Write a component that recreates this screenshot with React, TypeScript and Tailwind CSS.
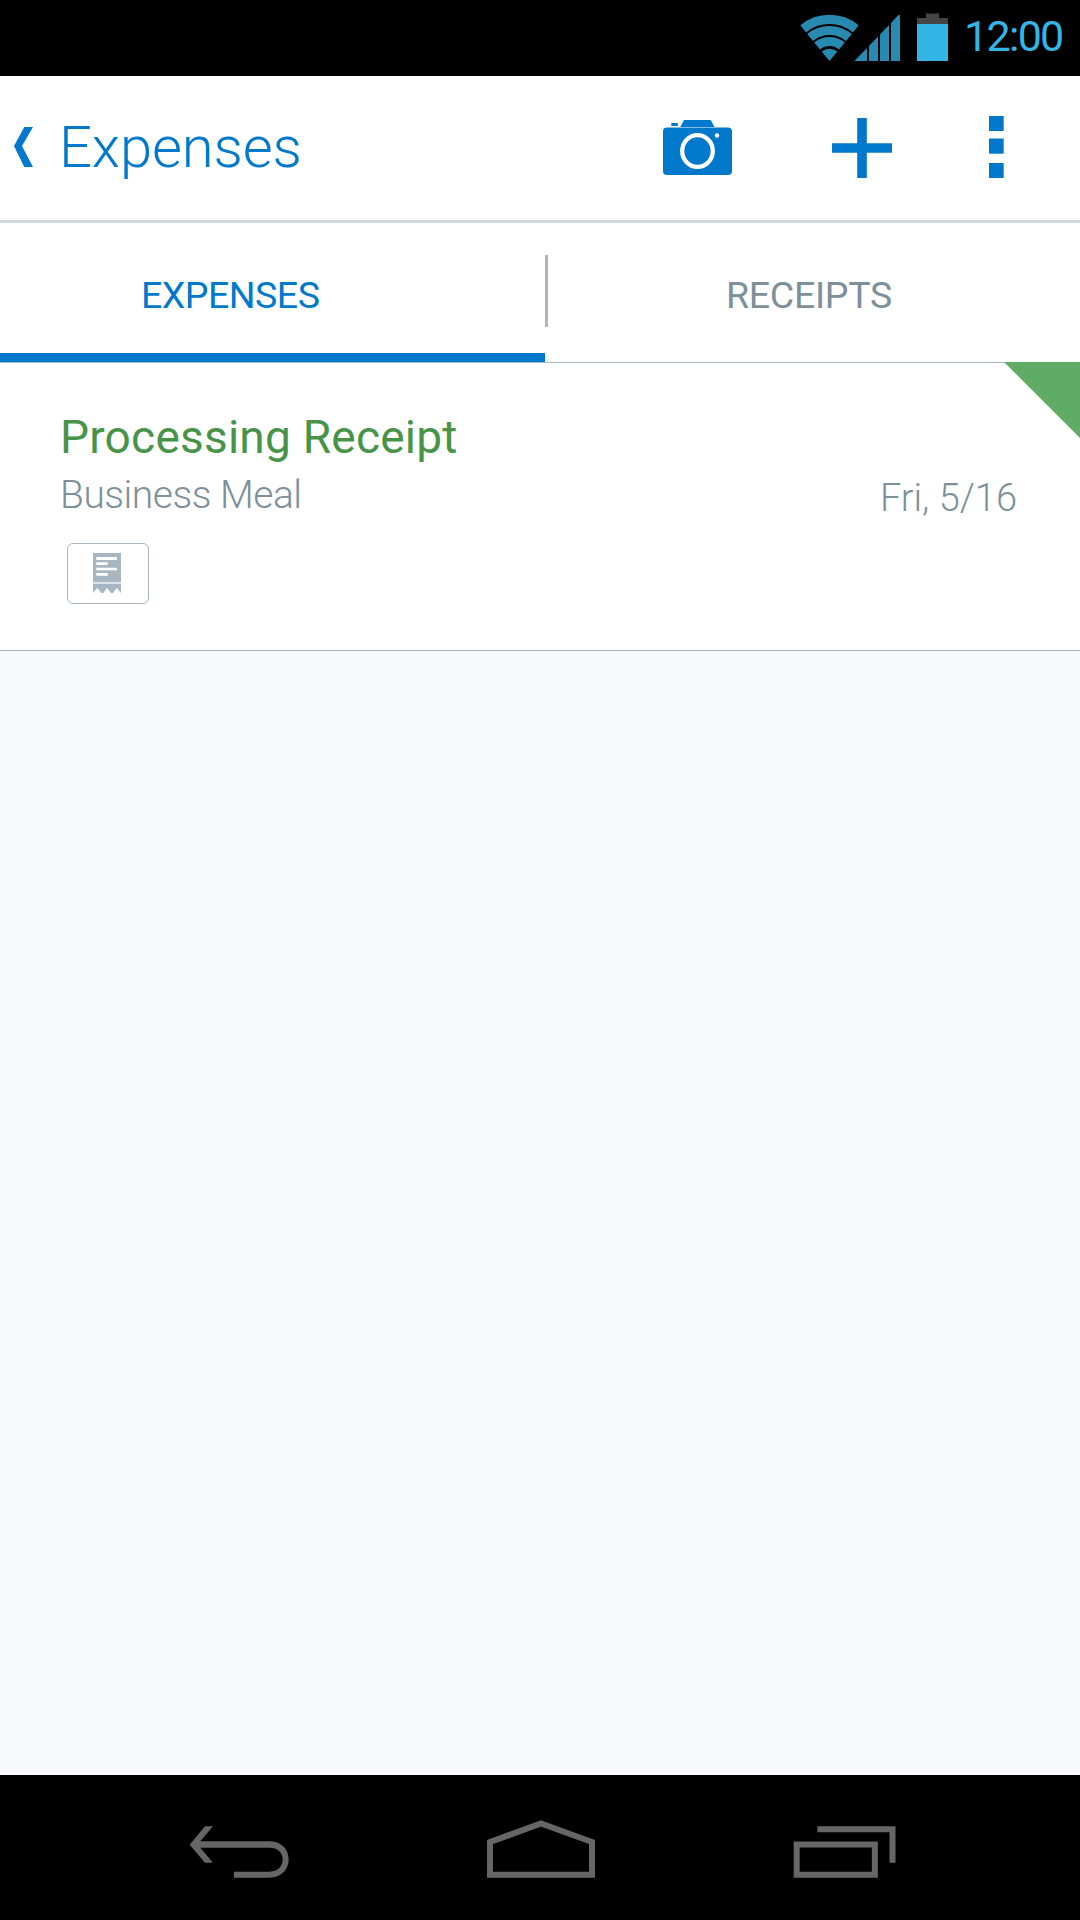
import React from 'react';

function StatusBar() {
  return (
    <div className="flex h-[76px] items-start bg-black pl-[799px]">
      <svg className="mt-[12px] h-[50px] w-[151px] shrink-0" viewBox="799 12 151 50">
        <g fill="none" stroke="#2889b1" strokeWidth="9.2">
          <path d="M803.2 28.9A41.4 41.4 0 0 1 855.8 28.9" />
          <path d="M810.1 37.5A30.4 30.4 0 0 1 848.9 37.5" />
          <path d="M817.1 46A19.4 19.4 0 0 1 841.9 46" />
        </g>
        <g fill="#2889b1">
          <path d="M829.5 61L821.7 51.5A12.3 12.3 0 0 1 837.3 51.5Z" />
          <path d="M854.3 61L867 48V61Z" />
          <path d="M869 61V46L878 36.5V61Z" />
          <path d="M880 61V34.5L889 25V61Z" />
          <path d="M891 61V23L898.5 15H900V61Z" />
        </g>
        <path d="M926 13.5H939V18H948V24H917V18H926Z" fill="#444444" />
        <path d="M917 24H948V61H917Z" fill="#33b5e5" />
      </svg>
      <span className="mt-[11px] ml-[14px] text-[43px] leading-[50px] tracking-[-1.7px] whitespace-nowrap text-[#33b5e5]">12:00</span>
    </div>
  );
}

function Header() {
  return (
    <header className="flex h-[147px] items-start border-b-[3px] border-[#d0d8de] bg-white pl-[14px] text-[#0078cc]">
      <svg className="mt-[51px] h-[40px] w-[19px] shrink-0" viewBox="14 127 19 40" fill="currentColor">
        <path d="M24.3 127H33L22 146L33 167H24.3L14 146Z" />
      </svg>
      <h1 className="mt-[36px] ml-[26px] w-[604px] text-[58px] leading-[70px] font-light tracking-[-0.15px] whitespace-nowrap">Expenses</h1>
      <svg className="mt-[44px] h-[55px] w-[69px] shrink-0" viewBox="663 120 69 55" fill="currentColor">
        <path d="M684 120H710.7L714.5 127H680.3Z" />
        <rect x="671.3" y="123" width="6.5" height="3" />
        <rect x="663" y="127.4" width="69" height="47.6" rx="4" />
        <ellipse cx="697.5" cy="151" rx="15.3" ry="15.8" fill="none" stroke="#fff" strokeWidth="4.3" />
        <circle cx="717" cy="135.5" r="2.2" fill="#fff" />
      </svg>
      <svg className="mt-[42px] ml-[100px] h-[60px] w-[60px] shrink-0" viewBox="832 118 60 60" fill="currentColor">
        <path d="M857.2 118H866.8V143.2H892V152.8H866.8V178H857.2V152.8H832V143.2H857.2Z" />
      </svg>
      <svg className="mt-[40px] ml-[97px] h-[62px] w-[15px] shrink-0" viewBox="989 116 15 62" fill="currentColor">
        <rect x="989" y="116" width="14.7" height="15" />
        <rect x="989" y="138.5" width="14.7" height="15.2" />
        <rect x="989" y="163" width="14.7" height="15" />
      </svg>
    </header>
  );
}

function Tabs() {
  return (
    <nav className="flex h-[140px] items-start border-b border-[#a7b6c0] bg-white text-[37.5px] leading-[44px]">
      <div className="flex h-[139px] w-[545px] flex-col border-b-[9px] border-[#0078cc] pt-[50px] pl-[141px] text-[#0078cc]">
        <span className="tracking-[-0.5px] whitespace-nowrap">EXPENSES</span>
      </div>
      <div className="mt-[32px] h-[72px] w-[3px] bg-[#a7b6c0]" />
      <span className="mt-[50px] ml-[178px] tracking-[-0.3px] whitespace-nowrap text-[#7d909a]">RECEIPTS</span>
    </nav>
  );
}

function ExpenseRow() {
  return (
    <section className="relative flex h-[288px] justify-between border-b border-[#a7b6c0] bg-white pr-[63px] pl-[60px]">
      <div className="flex flex-col items-start">
        <h2 className="mt-[47px] text-[46px] leading-[54px] tracking-[0.23px] whitespace-nowrap text-[#479449]">Processing Receipt</h2>
        <p className="mt-[8px] text-[39px] leading-[46px] font-light tracking-[-0.5px] whitespace-nowrap text-[#7d909a]">Business Meal</p>
        <div className="mt-[25px] ml-[7px] flex h-[61px] w-[82px] items-start rounded-[6px] border border-[#a7b6c0] pl-[25px]">
          <svg className="mt-[9px] h-[40px] w-[28px]" viewBox="159 459 84 120" fill="#a7b6c0">
            <path d="M159 459H243V546H159Z" />
            <path d="M159 546H243V552H159Z" fill="#dde3e7" />
            <path d="M159 552H243V579L230 564L219 579H213L201 564L190 579H184L172 564L159 579Z" />
            <path d="M169 471h62v9h-62zM169 487h34v8h-34zM169 503h62v8h-62zM169 519h34v8h-34z" fill="#fff" />
          </svg>
        </div>
      </div>
      <time className="mt-[112px] text-[38px] leading-[46px] font-light whitespace-nowrap text-[#7d909a]">Fri, 5/16</time>
      <svg className="absolute -top-px right-0 h-[76px] w-[76px]" viewBox="0 0 76 76">
        <path d="M0 0H76V76Z" fill="#60ab65" />
      </svg>
    </section>
  );
}

function NavBar() {
  return (
    <footer className="flex h-[145px] items-start bg-black pl-[189px]">
      <svg className="mt-[51px] h-[52px] w-[100px]" viewBox="87 198 300 156" fill="#666">
        <path d="M89 254L135 199H159L121 244H328C362 244 386 266 386 298C386 331 362 353 328 353H222V335H328C353 335 368 320 368 298C368 277 353 263 328 263H121L159 308H135Z" />
      </svg>
      <svg className="mt-[45px] ml-[198px] h-[58px] w-[108px]" viewBox="981 180 324 174" fill="none" stroke="#666" strokeWidth="18">
        <path d="M990 246L1143 190.5L1296 246V344H990Z" />
      </svg>
      <svg className="mt-[51px] ml-[198px] h-[52px] w-[103px]" viewBox="579 198 309 156" fill="none" stroke="#666" strokeWidth="18">
        <path d="M590 253.500H824.500V344H590Z" />
        <path d="M652 208H877.500V308" />
      </svg>
    </footer>
  );
}

export default function App() {
  return (
    <div className="flex h-[1920px] w-[1080px] flex-col bg-[#f6fafd] font-[Roboto,sans-serif]">
      <StatusBar />
      <Header />
      <Tabs />
      <ExpenseRow />
      <main className="flex-1" />
      <NavBar />
    </div>
  );
}
